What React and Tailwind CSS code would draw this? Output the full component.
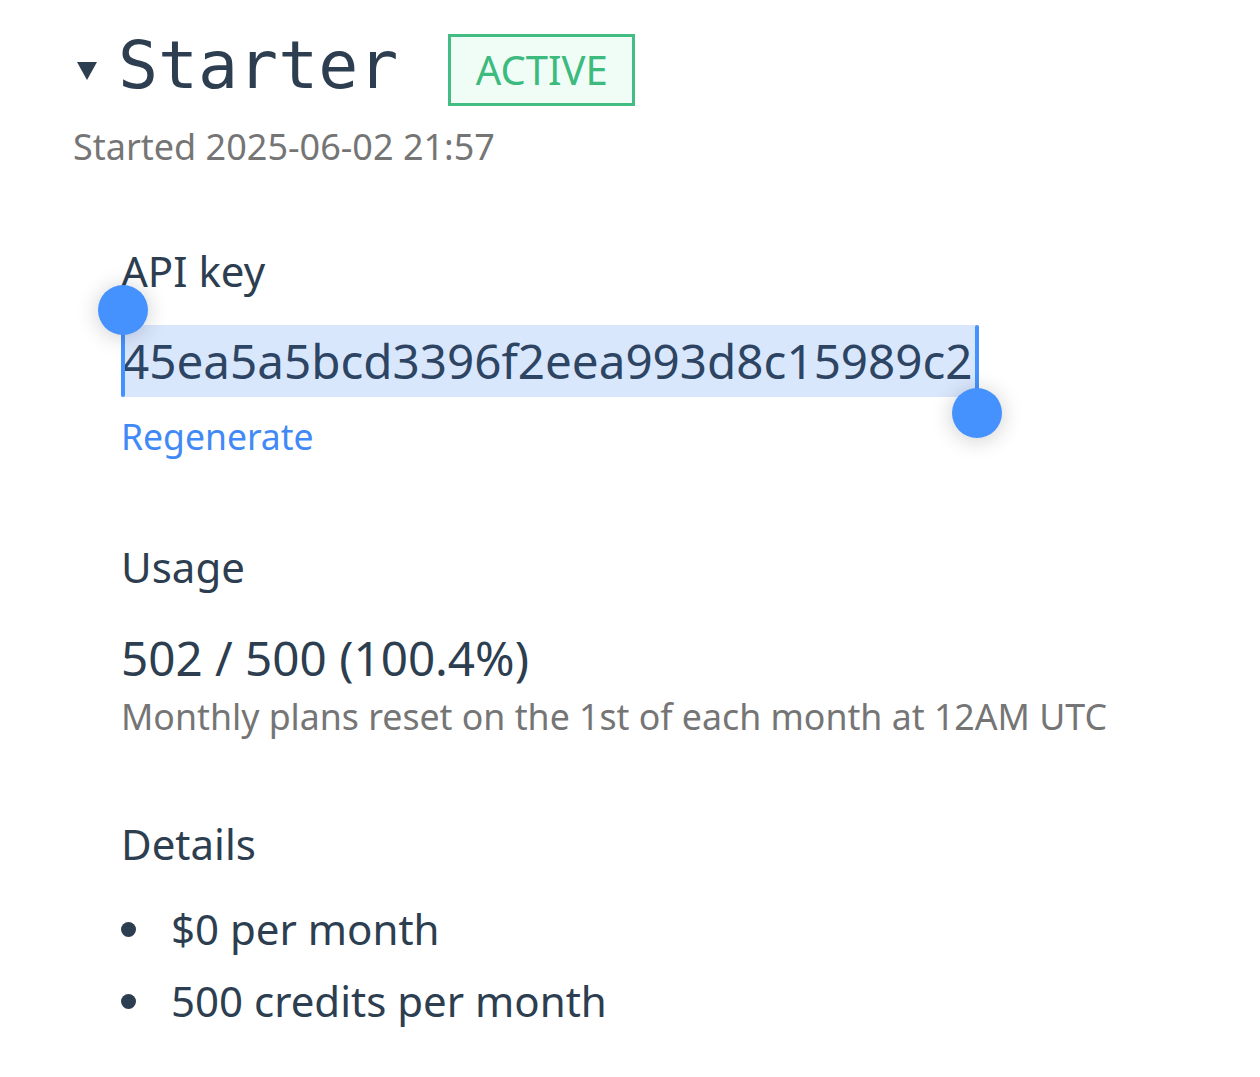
import React from "react";

const sans = { fontFamily: '"Noto Sans", "Open Sans", sans-serif' };

export default function App() {
  return (
    <div className="min-h-[1077px] w-[1260px] bg-white pl-[73px] pt-[32px] text-[#2c3e50]" style={sans}>
      {/* Header */}
      <div className="flex items-start">
        <svg className="mt-[30px] ml-[4px] shrink-0" width="20" height="18" viewBox="0 0 20 18">
          <polygon points="0,0 20,0 10,18" fill="#2c3e50" />
        </svg>
        <div
          className="ml-[21px] text-[66.5px] leading-[66px] text-[#2c3e50]"
          style={{ fontFamily: '"DejaVu Sans Mono", "Liberation Mono", monospace' }}
        >
          Starter
        </div>
        <div className="ml-[50px] mt-[2px] flex h-[72px] w-[187px] items-center justify-center border-[3px] border-[#44bd84] bg-[#effdf6] text-[40px] leading-none text-[#3dba7e]">
          ACTIVE
        </div>
      </div>

      <div className="mt-[14px] text-[36px] leading-[54px] text-[#757575]">Started 2025-06-02 21:57</div>

      <div className="pl-[48px]">
        {/* API key */}
        <div className="mt-[67px] text-[42px] leading-[60px]">API key</div>
        <div className="mt-[24px] flex">
          <div className="relative">
            <div className="bg-[#d9e7fd] pl-[1px] pr-[4px] text-[47.6px] leading-[72px] text-[#2d4563]">
              45ea5a5bcd3396f2eea993d8c15989c2
            </div>
            {/* left handle */}
            <div className="absolute left-[0px] top-[-16px] h-[88px] w-[4px] rounded-full bg-[#4592fe]" />
            <div className="absolute left-[-23px] top-[-40px] h-[50px] w-[50px] rounded-full bg-[#4592fe] shadow-[0_2px_22px_rgba(0,0,0,0.2)]" />
            {/* right handle */}
            <div className="absolute right-[-2px] top-0 h-[88px] w-[4px] rounded-full bg-[#4592fe]" />
            <div className="absolute right-[-25px] top-[63px] h-[50px] w-[50px] rounded-full bg-[#4592fe] shadow-[0_2px_22px_rgba(0,0,0,0.2)]" />
          </div>
        </div>
        <div className="mt-[12px] text-[35.5px] leading-[54px] text-[#4189f6]">Regenerate</div>

        {/* Usage */}
        <div className="mt-[74px] text-[42px] leading-[60px]">Usage</div>
        <div className="mt-[31px] text-[47.6px] leading-[60px]">502 / 500 (100.4%)</div>
        <div className="mt-[3px] text-[35.7px] leading-[50px] text-[#757575]">
          Monthly plans reset on the 1st of each month at 12AM UTC
        </div>

        {/* Details */}
        <div className="mt-[73px] text-[42px] leading-[60px]">Details</div>
        <ul className="mt-[19px]">
          <li className="flex items-start text-[42px] leading-[72px]">
            <span className="mt-[29px] h-[15px] w-[15px] shrink-0 rounded-full bg-[#2c3e50]" />
            <span className="ml-[35px]">$0 per month</span>
          </li>
          <li className="flex items-start text-[42px] leading-[72px]">
            <span className="mt-[29px] h-[15px] w-[15px] shrink-0 rounded-full bg-[#2c3e50]" />
            <span className="ml-[35px]">500 credits per month</span>
          </li>
        </ul>
      </div>
    </div>
  );
}
